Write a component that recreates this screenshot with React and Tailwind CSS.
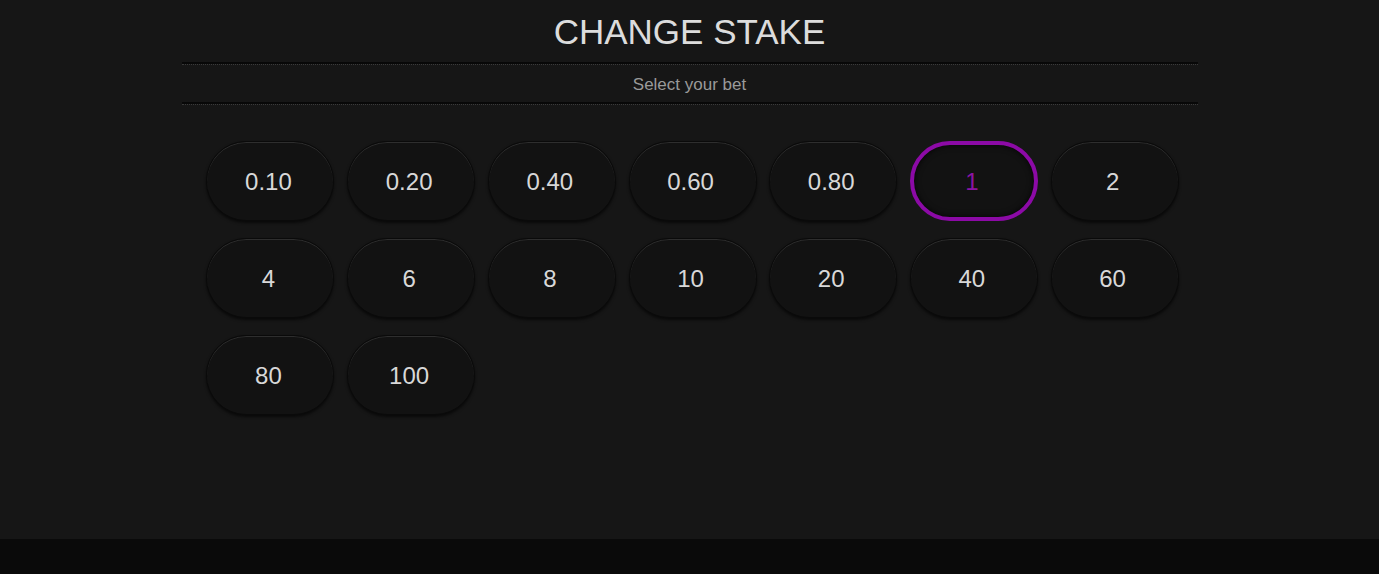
import { useState } from "react";

const stakes = ["0.10", "0.20", "0.40", "0.60", "0.80", "1", "2", "4", "6", "8", "10", "20", "40", "60", "80", "100"];

const App = () => {
  const [selected, setSelected] = useState("1");

  return (
    <div className="h-[574px] flex flex-col bg-[#161616] font-['Liberation_Sans',Arial,sans-serif]">
      <div className="flex-1 flex flex-col items-center">
        <div className="w-[1016px]">
          <h1 className="h-[62px] pt-[10px] text-center text-[35px] leading-[44px] text-[#dcdcdc]">CHANGE STAKE</h1>
          <div className="border-t-2 border-[#080808]" />
          <div className="border-t border-dotted border-[#3a3a3a]" />
          <p className="h-[37px] pt-px text-center text-[17px] leading-[37px] text-[#9a9a9a]">Select your bet</p>
          <div className="border-t-2 border-[#080808]" />
          <div className="border-t border-dotted border-[#3a3a3a]" />
        </div>

        <div className="mt-[36px] ml-[6px] grid grid-cols-[repeat(7,128px)] gap-x-[12.7px] gap-y-[17px]">
          {stakes.map((stake) => {
            const active = stake === selected;
            return (
              <button
                key={stake}
                onClick={() => setSelected(stake)}
                className={
                  active
                    ? "h-[80px] pr-[4px] pt-[2px] rounded-full bg-[#121212] border-[4px] border-[#8c0aa6] text-[24px] text-[#8c14a4] shadow-[inset_0_0_6px_rgba(0,0,0,0.8)]"
                    : "h-[80px] pr-[4px] pt-[2px] rounded-full bg-[#121212] border border-[#0a0a0a] text-[24px] text-[#d8d8d8] shadow-[inset_0_1px_0_#2e2e2e,0_2px_3px_rgba(0,0,0,0.6)]"
                }
              >
                {stake}
              </button>
            );
          })}
        </div>
      </div>
      <div className="h-[35px] bg-[#0a0a0a]" />
    </div>
  );
};

export default App;
